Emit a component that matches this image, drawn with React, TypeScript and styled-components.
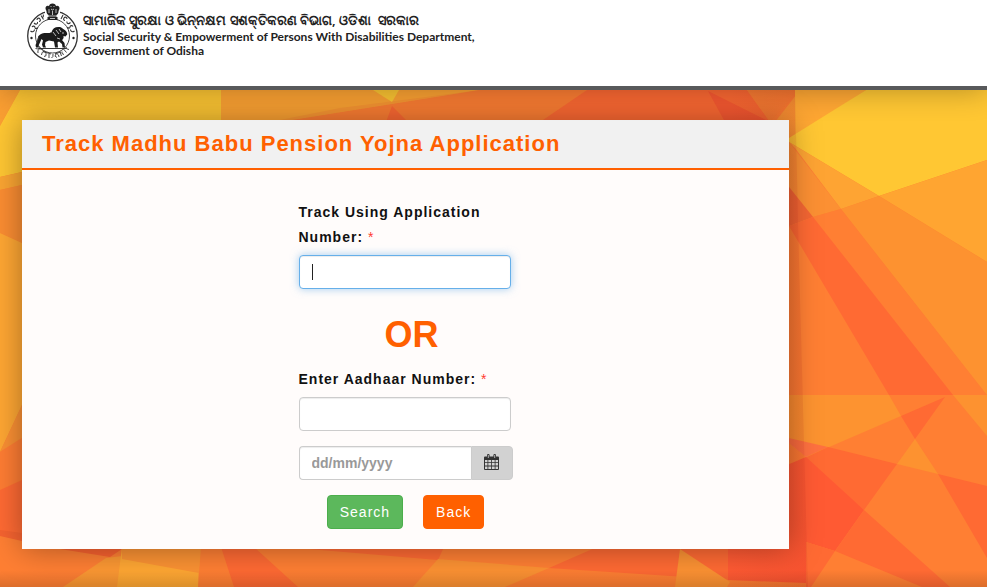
import React from "react";
import styled, { createGlobalStyle } from "styled-components";

const GlobalStyle = createGlobalStyle`
  *, *::before, *::after { box-sizing: border-box; }
  body {
    margin: 0;
    background: #ffffff;
    color: #111111;
    font-family: "Liberation Sans", Arial, sans-serif;
    font-size: 14px;
  }
`;

const Page = styled.div`
  display: flex;
  flex-direction: column;
  min-height: 100vh;
`;

const Masthead = styled.header`
  position: relative;
  z-index: 1;
  display: flex;
  align-items: flex-start;
  gap: 4px;
  min-height: 90px;
  padding: 2px 26px 0;
  background: #ffffff;
  border-bottom: 4px solid #58595b;
  box-shadow: 0 0 30px rgba(0, 0, 0, 0.3);
`;

const Emblem = styled.svg`
  flex: none;
  width: 53px;
  height: 60px;
`;

const Department = styled.div`
  max-width: 420px;
  padding-top: 8px;
  color: #222222;
  font-weight: bold;
`;

const OdiaName = styled.div`
  font-family: "Noto Sans", sans-serif;
  font-size: 13px;
  font-weight: 600;
  line-height: 20px;
  white-space: pre;
`;

const EnglishName = styled.div`
  font-family: Lato, "Noto Sans", sans-serif;
  font-size: 12px;
  line-height: 14px;
`;

const Stage = styled.main`
  display: grid;
  flex: 1;
  overflow: hidden;
`;

const Backdrop = styled.svg`
  grid-area: 1 / 1;
  width: 100%;
  height: 100%;
  min-height: 0;
  contain: size;
`;

const Content = styled.div`
  grid-area: 1 / 1;
  padding: 30px 198px 38px 22px;
  z-index: 0;
`;

const Card = styled.section`
  background: #fffcfb;
  box-shadow: 0 0 30px rgba(0, 0, 0, 0.35);
`;

const CardTitle = styled.h1`
  margin: 0;
  padding: 0 20px;
  background: #f1f1f1;
  border-bottom: 2px solid #ff6000;
  color: #ff6000;
  font-size: 22px;
  line-height: 48px;
  letter-spacing: 1px;
`;

const Form = styled.form`
  display: flex;
  flex-direction: column;
  width: 214px;
  margin: 0 auto;
  padding: 30px 0 20px;
`;

const Label = styled.label`
  margin-bottom: 5px;
  font-weight: bold;
  line-height: 25px;
  letter-spacing: 1px;
`;

const Required = styled.span`
  color: #ff3b30;
  font-weight: normal;
`;

const TextBox = styled.input`
  width: 100%;
  min-width: 0;
  max-width: 212px;
  height: 34px;
  padding: 6px 12px;
  background: #ffffff;
  border: 1px solid #cccccc;
  border-radius: 4px;
  box-shadow: inset 0 1px 1px rgba(0, 0, 0, 0.075);
  color: #333333;
  font: bold 14px "Liberation Sans", Arial, sans-serif;
  outline: none;

  &::placeholder { color: #999999; opacity: 1; }
  &:focus {
    border-color: #66afe9;
    box-shadow: inset 0 1px 1px rgba(0, 0, 0, 0.075), 0 0 8px rgba(102, 175, 233, 0.6);
  }
  &:focus:placeholder-shown {
    caret-color: transparent;
    background: linear-gradient(#222222, #222222) 12px 8px / 1px 16px no-repeat #ffffff;
  }
`;

const Divider = styled.p`
  margin: 26px 0 12px;
  padding-left: 12px;
  color: #ff6000;
  font-size: 36px;
  font-weight: bold;
  line-height: 40px;
  letter-spacing: 0;
  text-align: center;
`;

const DateGroup = styled.div`
  display: flex;
  margin: 15px 0;

  ${TextBox} { flex: 1; border-right: 0; border-radius: 4px 0 0 4px; }
`;

const PickerButton = styled.button`
  display: flex;
  align-items: center;
  justify-content: center;
  width: 42px;
  padding: 0 0 2px;
  background: #d2d2d2;
  border: 1px solid #cccccc;
  border-radius: 0 4px 4px 0;
`;

const Actions = styled.div`
  display: flex;
  justify-content: center;
  gap: 20px;
`;

const ActionButton = styled.button<{ $tone: "go" | "back" }>`
  height: 34px;
  padding: 0 12px;
  background: ${(p) => (p.$tone === "go" ? "#5cb85c" : "#ff6000")};
  border: 1px solid ${(p) => (p.$tone === "go" ? "#4cae4c" : "#ff6000")};
  border-radius: 4px;
  color: #ffffff;
  font: 14px "Liberation Sans", Arial, sans-serif;
  letter-spacing: 1px;
`;

const facets: [string, string][] = [
  // left margin
  ["#fca033", "0,90 20,90 0,126"],
  ["#ffc733", "20,90 221,90 221,130 22,172 0,177 0,126"],
  ["#fba532", "0,177 22,172 60,170 60,184 22,185 0,190"],
  ["#fb8d32", "0,190 22,185 60,184 60,256 22,243 0,233"],
  ["#ffa733", "0,233 22,243 60,256 60,360 22,405 0,452"],
  ["#fb9033", "0,452 22,405 60,360 60,420 22,438 0,452"],
  ["#ff7d33", "0,452 22,438 60,420 60,465 22,480 0,490"],
  ["#ff6a33", "0,490 22,480 60,465 60,540 22,535 0,532"],
  ["#f66330", "0,530 22,533 60,540 60,546 22,541 0,536"],
  // strip above the card
  ["#ffa433", "221,90 480,90 280,122 221,122"],
  ["#fc9833", "340,108 480,90 280,122 270,122"],
  ["#ffc733", "373,90 399,90 392,102"],
  ["#ff7f33", "480,90 587,90 543,122 280,122"],
  ["#ff6a33", "392,106 408,122 386,122"],
  ["#ff6a33", "587,90 747,90 770,122 540,122"],
  ["#fb5a32", "708,91 770,122 725,122"],
  ["#fc7f33", "747,90 800,90 770,122"],
  ["#fc9833", "800,90 803,90 795,145 789,140 775,122"],
  // right margin, upper half
  ["#ffa733", "795,90 866,90 795,136"],
  ["#ffc733", "866,90 987,90 987,160 879,196 789,142 789,138"],
  ["#ffa531", "987,160 987,262 879,196"],
  ["#fea433", "789,142 879,196 841,209 795,148"],
  ["#fd9230", "879,196 987,262 987,396 841,209"],
  ["#fc9033", "789,142 841,209 813,217 789,187"],
  ["#f46633", "780,177 789,187 813,217 789,226 780,228"],
  ["#ff7f33", "841,209 987,395 953,395 813,217"],
  ["#ff6a33", "789,226 813,217 953,395 889,395"],
  // right margin, lower half
  ["#fd9330", "780,395 889,395 901,416 806,457 780,436"],
  ["#fd9230", "953,395 987,395 987,436"],
  ["#ff6a33", "945,397 901,416 915,439"],
  ["#fd9230", "915,439 938,474 897,464"],
  ["#ff7140", "780,436 828,447 806,457"],
  ["#ff6a33", "828,447 897,464 864,510 803,459"],
  ["#ff5a33", "780,468 806,457 864,510 835,551 780,534"],
  ["#ff6a33", "938,474 987,486 987,558"],
  ["#ff6a33", "864,510 950,587 922,587 835,551"],
  ["#ff6a33", "806,542 835,551 811,587 806,587"],
  // strip below the card
  ["#f8622f", "60,549 122,549 110,557"],
  ["#fc9833", "63,587 106,558 122,556 118,587"],
  ["#ffa733", "122,547 200,547 198,587 117,587"],
  ["#fb9233", "122,547 201,547 199,573 122,559"],
  ["#ff6a33", "221,547 254,547 298,587 234,587"],
  ["#ff6a33", "285,547 444,547 438,560"],
  ["#fd9233", "438,559 549,568 505,587 413,587"],
  ["#ff6a33", "549,568 597,547 731,547 731,580"],
  ["#fd9233", "680,549 730,582 727,587 675,587"],
  ["#ff5a33", "728,534 806,534 806,583 728,580"],
];

function FacetedBackdrop() {
  return (
    <Backdrop viewBox="0 90 987 497" preserveAspectRatio="xMinYMin slice" aria-hidden="true">
      <defs>
        <linearGradient id="floor" x1="0" y1="0" x2="0" y2="1">
          <stop offset="0" stopColor="#000" stopOpacity="0" />
          <stop offset="1" stopColor="#000" stopOpacity="0.14" />
        </linearGradient>
        <linearGradient id="fold" x1="0" y1="0" x2="1" y2="0">
          <stop offset="0" stopColor="#c8281e" stopOpacity="0" />
          <stop offset="1" stopColor="#c8281e" stopOpacity="0.14" />
        </linearGradient>
      </defs>
      <rect x="0" y="90" width="987" height="497" fill="#ff7f33" />
      {facets.map(([fill, points], i) => (
        <polygon key={i} fill={fill} points={points} />
      ))}
      <polygon points="730,90 795,90 799,260 808,587 730,587" fill="url(#fold)" />
      <rect x="0" y="570" width="987" height="17" fill="url(#floor)" />
    </Backdrop>
  );
}

function StateEmblem() {
  return (
    <Emblem viewBox="0 0 53 60" role="img" aria-label="Government of Odisha emblem">
      <g fill="none" stroke="#333">
        <circle cx="26.5" cy="34" r="24.8" strokeWidth="1.3" />
        <circle cx="26.5" cy="34" r="17" strokeWidth="0.9" />
        <path strokeWidth="1.1" d="M4.500 29c2 1.500 4 .5 4-1.500M6 25c1-1.500 3-1 3 .5s2 1.500 2.500 0M8 21c2 2 4 1 3.500-1M11 18c0-2 2-2.500 3-1s0 2.500-1 2.500M15 13.500l2.500 4M16 16c1-.5 2-2 1-3.500" />
        <path strokeWidth="1.100" d="M48.500 29c-2 1.500-4 .5-4-1.500M47 24.500c-1-1.500-3-1-3 .5s-2 1.500-2.500 0M44.500 20.500c-2 2-4 1-3.500-1M41 17c0-2-2-2.500-3-1s0 2.500 1 2.500M37 13l-2 4" />
        <path strokeWidth="0.9" d="M9.500 46.500q3 1.500 4.500-1M12 51q-1-3 1.500-4t3 1.500M15.500 53q0-3 2.500-4M18 54.500q3 0 2-3t-2.500-1.500M17 49.500l8 2.500M23 56v-4M25.500 56q2-1 1.500-4M31 55.500q-3-1-1.500-3t3 .5l.5 2M29 51.700l6-1.700M35.500 54l-1.500-4M38 52.500q-3-.5-2-3M40.500 50.500l-3-3.500M43 47.500q-3 0-3-2.500" />
      </g>
      <path fill="#fff" d="M19 2h15v15H19z" />
      <path
        fill="#222"
        d="M26.500 1.500c2 0 3.500 1.200 3.500 2.700 2-1 3.500.3 3.500 2 0 1.500-1 2-1 3.300 0 1.700-1 3-2 3.500v2h1v3h-10v-3h1v-2c-1-.5-2-1.800-2-3.500 0-1.300-1-1.800-1-3.300 0-1.700 1.500-3 3.500-2 0-1.500 1.500-2.700 3.500-2.700z"
      />
      <path
        stroke="#fff"
        strokeWidth="0.7"
        fill="none"
        d="M24.500 4.500h1M27.500 4.500h1M25 7l1.500 1 1.500-1M23 7v4M30 7v4M26.500 9v4M22 14h9M24 16.500h5"
      />
      <path
        fill="#1b1b1b"
        d="M12.500 34c2-2.500 5-3 8-3 2.500 0 4 .2 5-.7 1-4 4-5.800 8-5.300 2 .2 3 1.500 4.500 2.500 2 1 3.500 3 3.200 5l-1.700 2-2-.5c.5 2-.5 3.500-1.500 4l2.500 3 .5 4.500h-2.500l-.5-3.500-3-2.500-1.500 1 .5 5h-3l-1-6-5-1-3.500 1.500-.5 3 1 2.500h-3l-1-3 1-4-1.500-1.500-1.500 3.500-1.500 3 .5 2h-3l-.5-2.500 2.500-5z"
      />
      <path
        fill="none"
        stroke="#fff"
        strokeWidth="0.7"
        d="M27 30l3 4M30 28l3 4M33 27l2 3M36 31h2M31 36l3 1"
      />
      <path fill="none" stroke="#222" strokeWidth="0.9" d="M13 34l-1.500 4-.5 4M12.500 46.500h28" />
      <circle cx="5.500" cy="36" r="1.200" fill="#222" />
      <circle cx="47.500" cy="36" r="1.200" fill="#222" />
    </Emblem>
  );
}

function CalendarIcon() {
  return (
    <svg width="15" height="16" viewBox="0 0 15 16" aria-hidden="true">
      <path
        fill="#333"
        fillRule="evenodd"
        d="M1 2.500h2V1.300Q3 0 4.300 0T5.600 1.300V2.500H9.400V1.300Q9.400 0 10.700 0T12 1.300V2.500h2q1 0 1 1V15q0 1-1 1H1q-1 0-1-1V3.500q0-1 1-1zM1 6v2.300h2.500V6zM4.300 6v2.300h2.800V6zM7.900 6v2.300h2.800V6zM11.500 6v2.300H14V6zM1 9.100v2.500h2.500V9.100zM4.300 9.100v2.500h2.800V9.100zM7.900 9.100v2.500h2.800V9.100zM11.500 9.100v2.500H14V9.100zM1 12.400V15h2.500v-2.600zM4.300 12.400V15h2.800v-2.600zM7.900 12.400V15h2.800v-2.600zM11.500 12.400V15H14v-2.600z"
      />
      <path d="M4.300 1v3M10.700 1v3" stroke="#d2d2d2" strokeWidth="0.800" />
    </svg>
  );
}

export default function App() {
  return (
    <Page>
      <GlobalStyle />
      <Masthead>
        <StateEmblem />
        <Department>
          <OdiaName lang="or">ସାମାଜିକ ସୁରକ୍ଷା ଓ ଭିନ୍ନକ୍ଷମ ସଶକ୍ତିକରଣ ବିଭାଗ, ଓଡିଶା  ସରକାର</OdiaName>
          <EnglishName>
            Social Security &amp; Empowerment of Persons With Disabilities Department,
            Government of Odisha
          </EnglishName>
        </Department>
      </Masthead>
      <Stage>
        <FacetedBackdrop />
        <Content>
          <Card>
            <CardTitle>Track Madhu Babu Pension Yojna Application</CardTitle>
            <Form onSubmit={(e) => e.preventDefault()}>
              <Label htmlFor="application">
                Track Using Application Number: <Required>*</Required>
              </Label>
              <TextBox id="application" type="text" placeholder=" " autoFocus />
              <Divider>OR</Divider>
              <Label htmlFor="aadhaar">
                Enter Aadhaar Number: <Required>*</Required>
              </Label>
              <TextBox id="aadhaar" type="text" />
              <DateGroup>
                <TextBox type="text" placeholder="dd/mm/yyyy" aria-label="Date of birth" />
                <PickerButton type="button" aria-label="Open calendar">
                  <CalendarIcon />
                </PickerButton>
              </DateGroup>
              <Actions>
                <ActionButton $tone="go" type="submit">Search</ActionButton>
                <ActionButton $tone="back" type="button">Back</ActionButton>
              </Actions>
            </Form>
          </Card>
        </Content>
      </Stage>
    </Page>
  );
}
